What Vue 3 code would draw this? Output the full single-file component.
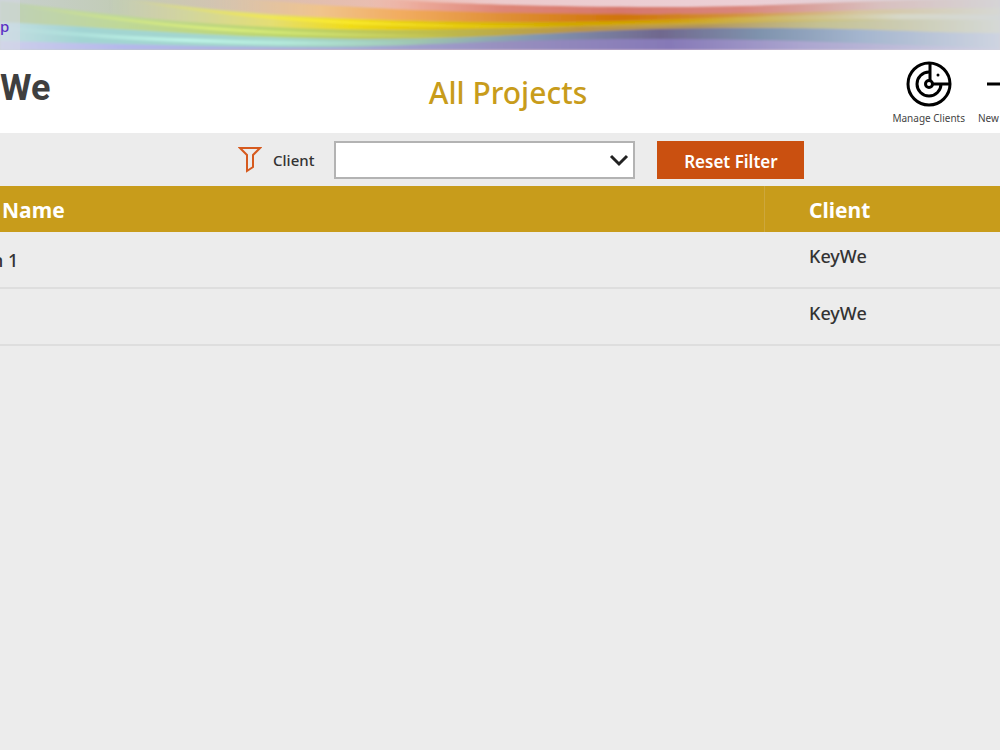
<script setup>
import { ref } from 'vue'

const client = ref('')
const projects = [
  { id: 1, name: 'n 1', client: 'KeyWe' },
  { id: 2, name: '', client: 'KeyWe' },
]
const bands = [
  {
    id: 'red',
    d: 'M370 -2C430 3 540 7 660 7S850 0 1000 -2V50H370Z',
    stops: [[37, '#efb3a400'], [42, '#eba898'], [50, '#de8678'], [62, '#d6776c'], [74, '#d9857c'], [88, '#d9c0bf'], [100, '#d6d4d6']],
  },
  {
    id: 'peach',
    d: 'M210 -5C300 5 430 14 640 14S850 7 1000 8V50H210Z',
    stops: [[21, '#e0c8a000'], [32, '#f0c48c'], [40, '#f2ac60'], [50, '#e09038'], [62, '#d07408'], [73, '#d2903c'], [86, '#d5c5a0'], [100, '#d6d8d4']],
  },
  {
    id: 'yellow',
    d: 'M110 -3C210 10 310 22 540 22C700 21 790 11 1000 15V50H110Z',
    stops: [[11, '#d0d4a800'], [19, '#d2d69c'], [27, '#e4de74'], [35, '#f0dc18'], [46, '#dcbc04'], [56, '#d0a800'], [67, '#d0a008'], [79, '#cfbc78'], [90, '#d7d8c8'], [100, '#d4d8d8']],
  },
  {
    id: 'lime',
    d: 'M0 1C100 12 190 29 400 30C610 29 740 16 1000 20V50H0Z',
    stops: [[0, '#bfd0b8'], [12, '#bfd898'], [28, '#bdd66c'], [43, '#bfbd4c'], [58, '#b99448'], [70, '#b0945c'], [82, '#c4c194'], [100, '#d5d9d6']],
  },
  {
    id: 'teal',
    d: 'M0 22C100 27 220 38 360 39C530 38 590 28 740 28S910 33 1000 33V50H0Z',
    stops: [[0, '#c5dfe3'], [8, '#a2d4d3'], [28, '#a5d8cb'], [42, '#9ec4b0'], [54, '#8295b0'], [66, '#70688e'], [76, '#7f93ad'], [86, '#a4b5ce'], [100, '#ced4e1']],
  },
  {
    id: 'lavender',
    d: 'M0 41C110 44 230 47 330 47C430 46 490 39 650 39S870 45 1000 48V50H0Z',
    stops: [[0, '#ced0eb'], [12, '#b5b9eb'], [34, '#a5add8'], [50, '#9890bf'], [67, '#8679b7'], [80, '#aba5cf'], [100, '#d0d3e3']],
  },
]
const streaks = [
  { id: 'limeStreak', d: 'M20 5C120 20 210 36 460 36', color: '#e0f27c', opacity: 0.8, width: 3 },
  { id: 'goldStreak', d: 'M130 0C220 14 310 27 580 27', color: '#fff036', opacity: 0.7, width: 3 },
  { id: 'mintStreak', d: 'M0 28C100 37 210 45 420 43', color: '#c8fff0', opacity: 0.7, width: 4 },
  { id: 'amberStreak', d: 'M540 27C680 26 750 19 900 20', color: '#e0c020', opacity: 0.5, width: 2 },
]
</script>

<template>
  <div class="app">
    <div class="banner">
      <svg class="waves" viewBox="0 0 1000 50" preserveAspectRatio="none" aria-hidden="true">
        <defs>
          <linearGradient id="base">
            <stop offset="0" stop-color="#c8d0cf" />
            <stop offset=".12" stop-color="#c2ccb6" />
            <stop offset=".28" stop-color="#ddbfae" />
            <stop offset=".4" stop-color="#edbdb1" />
            <stop offset=".5" stop-color="#eccbcd" />
            <stop offset=".75" stop-color="#eccfd5" />
            <stop offset="1" stop-color="#d5d4da" />
          </linearGradient>
          <linearGradient v-for="b in bands" :id="b.id" :key="b.id" gradientUnits="userSpaceOnUse" x1="0" x2="1000">
            <stop v-for="s in b.stops" :key="s[0]" :offset="s[0] + '%'" :stop-color="s[1]" />
          </linearGradient>
          <linearGradient v-for="s in streaks" :id="s.id" :key="s.id">
            <stop offset="0" :stop-color="s.color" stop-opacity="0" />
            <stop offset=".45" :stop-color="s.color" :stop-opacity="s.opacity" />
            <stop offset="1" :stop-color="s.color" stop-opacity="0" />
          </linearGradient>
          <filter id="soft" x="-2%" y="-20%" width="104%" height="140%">
            <feGaussianBlur stdDeviation="1" />
          </filter>
        </defs>
        <rect width="1000" height="50" fill="url(#base)" />
        <g filter="url(#soft)">
          <path v-for="b in bands" :key="b.id" :d="b.d" :fill="`url(#${b.id})`" />
          <path v-for="s in streaks" :key="s.id" :d="s.d" fill="none" :stroke="`url(#${s.id})`" :stroke-width="s.width" />
        </g>
        <rect width="20" height="50" fill="#d5d9e6" fill-opacity=".5" />
      </svg>
      <a class="crumb" href="#">p</a>
    </div>

    <header class="header">
      <div class="brand">We</div>
      <h1 class="title">All Projects</h1>
      <nav class="actions">
        <button class="action" type="button">
          <svg width="48" height="48" viewBox="0 0 48 48" fill="none" stroke="#000" stroke-width="3" aria-hidden="true">
            <circle cx="24" cy="24" r="21" />
            <path d="M24 12A12 12 0 1 0 36 24" />
            <circle cx="24" cy="24" r="3.5" />
            <path d="M25 3V20M28 24H45" />
            <circle cx="33" cy="15" r="1.5" fill="#000" stroke="none" />
          </svg>
          <span>Manage Clients</span>
        </button>
        <button class="action new" type="button">
          <svg width="48" height="48" viewBox="0 0 48 48" fill="none" stroke="#000" stroke-width="3" aria-hidden="true">
            <path d="M9 24H39M24 9V39" />
          </svg>
          <span>New</span>
        </button>
      </nav>
    </header>

    <div class="filters">
      <label class="label" for="client">
        <svg width="24" height="28" viewBox="0 0 24 28" fill="none" stroke="#d65a1e" stroke-width="2" aria-hidden="true">
          <path d="M2 2H22L15 9V21L9 25V9Z" />
        </svg>
        Client
      </label>
      <div class="select">
        <select id="client" v-model="client">
          <option value=""></option>
          <option>KeyWe</option>
        </select>
        <svg class="chevron" width="20" height="14" viewBox="0 0 20 14" fill="none" stroke="#222" stroke-width="3" aria-hidden="true">
          <path d="M2 2L10 10L18 2" />
        </svg>
      </div>
      <button class="reset" type="button" @click="client = ''">Reset Filter</button>
    </div>

    <table class="projects">
      <thead>
        <tr><th class="name">Name</th><th class="client">Client</th></tr>
      </thead>
      <tbody>
        <tr v-for="p in projects" :key="p.id">
          <td class="name">{{ p.name }}</td>
          <td class="client">{{ p.client }}</td>
        </tr>
      </tbody>
    </table>
  </div>
</template>

<style>
body {
  margin: 0;
  background: #ececec;
}
</style>

<style scoped>
.app {
  overflow: hidden;
  color: #333;
  font-family: "Noto Sans", "Open Sans", sans-serif;
}
.app * {
  box-sizing: border-box;
}
button {
  border: 0;
  font-family: inherit;
}
.banner {
  position: relative;
  display: flex;
  align-items: center;
  height: 50px;
}
.waves {
  position: absolute;
  inset: 0;
  width: 100%;
  height: 100%;
}
.crumb {
  position: relative;
  padding-top: 2px;
  color: #5b2fc4;
  font-size: 15px;
  font-weight: 500;
  line-height: 20px;
  text-decoration: none;
}
.header {
  display: grid;
  grid-template-columns: 1fr auto 1fr;
  height: 83px;
  padding-left: 16px;
  background: #fff;
}
.brand {
  margin-left: -16px;
  padding-top: 13px;
  color: #3f3f3f;
  font-family: Roboto, "Open Sans", sans-serif;
  font-size: 36px;
  font-weight: 700;
  line-height: 50px;
}
.title {
  margin: 0;
  padding-top: 23px;
  color: #c89c1b;
  font-size: 30px;
  font-weight: 500;
  line-height: 40px;
}
.actions {
  display: flex;
  justify-content: flex-end;
  gap: 13px;
  padding-top: 10px;
}
.action {
  display: flex;
  flex: none;
  flex-direction: column;
  align-items: center;
  gap: 2px;
  padding: 0;
  background: none;
  color: #444;
  font-size: 10px;
  line-height: 16px;
}
.action svg {
  flex: none;
}
.new {
  align-items: flex-start;
  width: 22px;
}
.filters {
  display: flex;
  align-items: center;
  height: 53px;
  padding-left: 238px;
}
.label {
  display: flex;
  align-items: center;
  gap: 11px;
  margin-right: 20px;
  font-size: 15px;
  font-weight: 500;
  line-height: 24px;
}
.select {
  position: relative;
  width: 301px;
  margin-right: 22px;
}
.select select {
  display: block;
  width: 100%;
  height: 38px;
  padding: 0 36px 0 12px;
  border: 2px solid #b3b3b3;
  border-radius: 0;
  appearance: none;
  background: #fff;
  font: inherit;
}
.chevron {
  position: absolute;
  top: 13px;
  right: 6px;
  pointer-events: none;
}
.reset {
  width: 147px;
  height: 38px;
  padding: 4px 0 0;
  background: #ca5010;
  color: #fff;
  font-size: 17px;
  font-weight: 600;
}
.projects {
  width: 100%;
  border-collapse: separate;
  border-spacing: 0;
  table-layout: fixed;
}
th {
  height: 46px;
  padding: 2px 0 0 2px;
  background: #c89c1b;
  color: #fff;
  font-size: 21px;
  font-weight: 700;
  line-height: 28px;
  text-align: left;
}
th.client {
  width: 236px;
  padding-left: 44px;
  border-left: 1px solid #cda73c;
}
td {
  height: 57px;
  padding: 0;
  border-bottom: 2px solid #dedede;
  font-size: 18px;
  font-weight: 500;
  line-height: 28px;
}
td.name {
  padding-top: 1px;
  text-indent: -8px;
}
td.client {
  padding: 0 0 8px 45px;
}
</style>
